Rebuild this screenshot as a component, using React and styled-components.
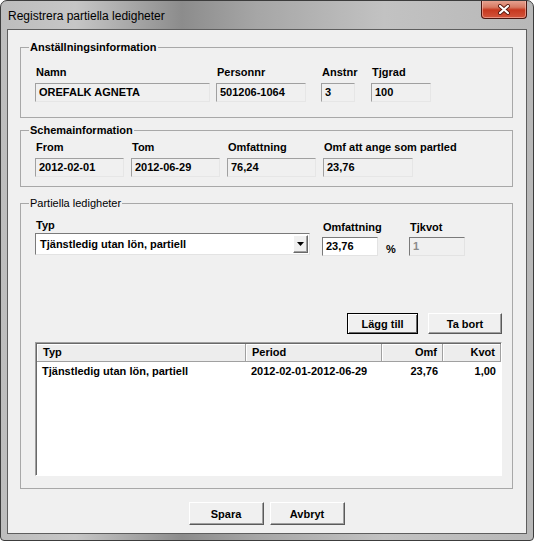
import styled, { createGlobalStyle } from "styled-components";

const GlobalStyle = createGlobalStyle`
  html, body { margin: 0; padding: 0; background: #fff; }
  body {
    font-family: "Liberation Sans", Arial, sans-serif;
    font-size: 11px;
    color: #000;
  }
  * { box-sizing: border-box; }
`;

const Window = styled.div`
  width: 534px;
  height: 541px;
  display: flex;
  flex-direction: column;
  border: 1px solid #3c3c3c;
  border-radius: 7px 7px 4px 4px;
  overflow: hidden;
  background: linear-gradient(
    90deg,
    #bdbdbd 0%,
    #c6c6c6 14%,
    #8c8c8c 34%,
    #a6a6a6 48%,
    #c2c2c2 72%,
    #b8b8b8 100%
  );
`;

const TitleBar = styled.div`
  height: 28px;
  flex: none;
  display: flex;
  justify-content: space-between;
  align-items: flex-start;
  padding-left: 7px;
`;

const Title = styled.div`
  font-size: 12px;
  line-height: 14px;
  padding-top: 8px;
  color: #000;
  white-space: nowrap;
`;

const CloseButton = styled.div`
  width: 46px;
  height: 19px;
  margin-top: -1px;
  margin-right: 6px;
  display: flex;
  align-items: center;
  justify-content: center;
  border: 1px solid #4a1610;
  border-top: none;
  border-radius: 0 0 4px 4px;
  background: linear-gradient(#e8a796 0%, #d77a63 40%, #c7381f 55%, #d2553c 100%);
  box-shadow: inset 0 0 0 1px rgba(255, 210, 200, 0.5);
`;

const Client = styled.div`
  flex: 1;
  margin: 0 6px 6px;
  border: 1px solid #5e5e5e;
  background: #f0f0f0;
  display: flex;
  flex-direction: column;
  padding: 10px 13px 8px 12px;
`;

const Group = styled.fieldset`
  margin: ${(p) => p.$mt || 0}px 0 0;
  padding: ${(p) => p.$pt}px 10px ${(p) => p.$pb}px 14px;
  border: 1px solid #a8a8a8;
  border-radius: 0;
  min-width: 0;
  display: flex;
  flex-direction: column;
`;

const Legend = styled.legend`
  margin-left: -6px;
  padding: 0 1px;
  line-height: 14px;
  font-weight: ${(p) => (p.$bold ? "bold" : "normal")};
`;

const Row = styled.div`
  display: flex;
  align-items: flex-start;
`;

const Field = styled.div`
  display: flex;
  flex-direction: column;
  flex: none;
  width: ${(p) => p.$w}px;
  margin-left: ${(p) => p.$ml || 0}px;
  margin-top: ${(p) => p.$mt || 0}px;
`;

const Label = styled.div`
  height: 13px;
  line-height: 13px;
  font-weight: bold;
  white-space: nowrap;
  padding-left: 1px;
  margin-bottom: ${(p) => (p.$gap === undefined ? 4 : p.$gap)}px;
`;

const ReadOnlyBox = styled.div`
  height: 19px;
  border: 1px solid;
  border-color: #a0a0a0 #e6e6e6 #e6e6e6 #a0a0a0;
  background: #f0f0f0;
  font-weight: bold;
  line-height: 16px;
  padding: 0 3px;
  white-space: nowrap;
  overflow: hidden;
`;

const TextBox = styled.div`
  height: 19px;
  border: 1px solid;
  border-color: #7a7a7a #e3e3e3 #e3e3e3 #7a7a7a;
  background: ${(p) => (p.$disabled ? "#f0f0f0" : "#fff")};
  color: ${(p) => (p.$disabled ? "#8a8a8a" : "#000")};
  font-weight: bold;
  line-height: 16px;
  padding: 0 3px;
`;

const Select = styled.div`
  height: 22px;
  display: flex;
  align-items: center;
  justify-content: space-between;
  border: 1px solid;
  border-color: #7a7a7a #e3e3e3 #e3e3e3 #7a7a7a;
  background: #fff;
  padding: 0 1px 0 4px;
  font-weight: bold;
`;

const DropButton = styled.div`
  width: 15px;
  height: 18px;
  display: flex;
  align-items: center;
  justify-content: center;
  background: #f0f0f0;
  border: 1px solid;
  border-color: #fff #696969 #696969 #fff;
  box-shadow: inset -1px -1px 0 #a0a0a0;
`;

const Percent = styled.div`
  align-self: flex-end;
  flex: none;
  width: 8px;
  margin-left: 8px;
  line-height: 13px;
  font-weight: bold;
  white-space: nowrap;
`;

const ButtonRow = styled.div`
  display: flex;
  justify-content: flex-end;
  gap: ${(p) => p.$gap}px;
  margin-top: ${(p) => p.$mt}px;
`;

const Button = styled.div`
  width: ${(p) => p.$w}px;
  height: ${(p) => p.$h || 21}px;
  display: flex;
  align-items: center;
  justify-content: center;
  font-weight: bold;
  background: #f0f0f0;
  border: 1px solid;
  border-color: ${(p) =>
    p.$default ? "#000" : "#ffffff #5a5a5a #5a5a5a #ffffff"};
  box-shadow: ${(p) =>
    p.$default
      ? "inset 1px 1px 0 #fff, inset -1px -1px 0 #696969"
      : "inset -1px -1px 0 #a0a0a0"};
`;

const List = styled.div`
  margin-top: 8px;
  height: 134px;
  background: #fff;
  border: 1px solid;
  border-color: #a0a0a0 #ffffff #ffffff #a0a0a0;
  box-shadow: inset 1px 1px 0 #696969;
  padding: 1px 0 0 1px;
`;

const columns = "209px 136px 61px 58px";

const HeaderRow = styled.div`
  display: grid;
  grid-template-columns: ${columns};
  height: 18px;
`;

const HeaderCell = styled.div`
  background: #ededed;
  border-right: 1px solid #a0a0a0;
  border-bottom: 1px solid #a0a0a0;
  box-shadow: inset 1px 1px 0 #fff;
  font-weight: bold;
  line-height: 17px;
  padding: 0 5px 0 6px;
  text-align: ${(p) => (p.$right ? "right" : "left")};
  white-space: nowrap;
`;

const DataRow = styled.div`
  display: grid;
  grid-template-columns: ${columns};
  height: 17px;
  margin-top: 1px;
`;

const DataCell = styled.div`
  font-weight: bold;
  line-height: 17px;
  padding: 0 5px;
  text-align: ${(p) => (p.$right ? "right" : "left")};
  white-space: nowrap;
`;

const Footer = styled.div`
  display: flex;
  justify-content: center;
  gap: 6px;
  margin-top: 13px;
`;

function CloseGlyph() {
  return (
    <svg width="14" height="11" viewBox="0 0 14 11">
      <path d="M3 2 L11 9 M11 2 L3 9" stroke="#5a1a10" strokeWidth="4" strokeLinecap="round" />
      <path d="M3 2 L11 9 M11 2 L3 9" stroke="#fff" strokeWidth="2.2" strokeLinecap="round" />
    </svg>
  );
}

function Arrow() {
  return (
    <svg width="7" height="4" viewBox="0 0 7 4">
      <path d="M0 0 H7 L3.5 4 Z" fill="#000" />
    </svg>
  );
}

export default function App() {
  return (
    <>
      <GlobalStyle />
      <Window>
        <TitleBar>
          <Title>Registrera partiella ledigheter</Title>
          <CloseButton>
            <CloseGlyph />
          </CloseButton>
        </TitleBar>

        <Client>
          <Group $pt={12} $pb={15}>
            <Legend $bold>Anställningsinformation</Legend>
            <Row>
              <Field $w={175}>
                <Label>Namn</Label>
                <ReadOnlyBox>OREFALK AGNETA</ReadOnlyBox>
              </Field>
              <Field $w={90} $ml={6}>
                <Label>Personnr</Label>
                <ReadOnlyBox>501206-1064</ReadOnlyBox>
              </Field>
              <Field $w={34} $ml={15}>
                <Label>Anstnr</Label>
                <ReadOnlyBox>3</ReadOnlyBox>
              </Field>
              <Field $w={60} $ml={16}>
                <Label>Tjgrad</Label>
                <ReadOnlyBox>100</ReadOnlyBox>
              </Field>
            </Row>
          </Group>

          <Group $mt={5} $pt={4} $pb={9}>
            <Legend $bold>Schemainformation</Legend>
            <Row>
              <Field $w={89}>
                <Label>From</Label>
                <ReadOnlyBox>2012-02-01</ReadOnlyBox>
              </Field>
              <Field $w={89} $ml={7}>
                <Label>Tom</Label>
                <ReadOnlyBox>2012-06-29</ReadOnlyBox>
              </Field>
              <Field $w={89} $ml={7}>
                <Label>Omfattning</Label>
                <ReadOnlyBox>76,24</ReadOnlyBox>
              </Field>
              <Field $w={90} $ml={7}>
                <Label>Omf att ange som partled</Label>
                <ReadOnlyBox>23,76</ReadOnlyBox>
              </Field>
            </Row>
          </Group>

          <Group $mt={9} $pt={9} $pb={12}>
            <Legend>Partiella ledigheter</Legend>
            <Row>
              <Field $w={275}>
                <Label $gap={1}>Typ</Label>
                <Select>
                  <span>Tjänstledig utan lön, partiell</span>
                  <DropButton>
                    <Arrow />
                  </DropButton>
                </Select>
              </Field>
              <Field $w={56} $ml={12} $mt={2}>
                <Label $gap={3}>Omfattning</Label>
                <TextBox>23,76</TextBox>
              </Field>
              <Percent>%</Percent>
              <Field $w={56} $ml={15} $mt={2}>
                <Label $gap={3}>Tjkvot</Label>
                <TextBox $disabled>1</TextBox>
              </Field>
            </Row>

            <ButtonRow $gap={10} $mt={57}>
              <Button $w={71} $default>
                Lägg till
              </Button>
              <Button $w={74}>Ta bort</Button>
            </ButtonRow>

            <List>
              <HeaderRow>
                <HeaderCell>Typ</HeaderCell>
                <HeaderCell>Period</HeaderCell>
                <HeaderCell $right>Omf</HeaderCell>
                <HeaderCell $right>Kvot</HeaderCell>
              </HeaderRow>
              <DataRow>
                <DataCell>Tjänstledig utan lön, partiell</DataCell>
                <DataCell>2012-02-01-2012-06-29</DataCell>
                <DataCell $right>23,76</DataCell>
                <DataCell $right>1,00</DataCell>
              </DataRow>
            </List>
          </Group>

          <Footer>
            <Button $w={75} $h={23}>
              Spara
            </Button>
            <Button $w={75} $h={23}>
              Avbryt
            </Button>
          </Footer>
        </Client>
      </Window>
    </>
  );
}
